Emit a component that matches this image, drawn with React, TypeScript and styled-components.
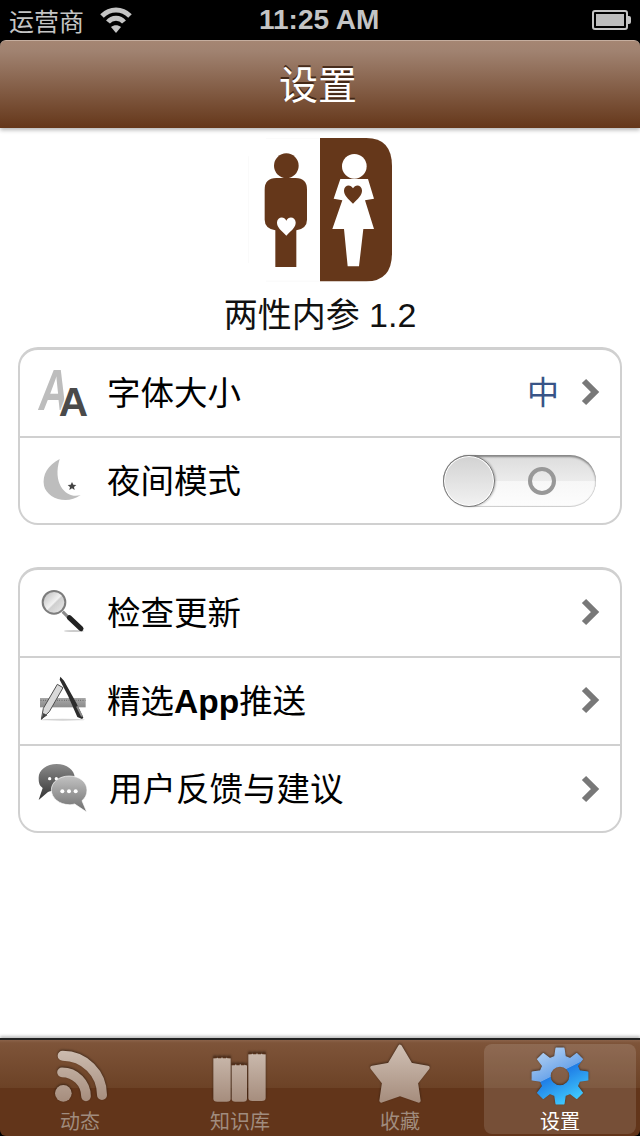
import React from 'react';
import styled, { createGlobalStyle } from 'styled-components';

const CJK = '"Liberation Sans", "Noto Sans CJK SC", sans-serif';

const GlobalStyle = createGlobalStyle`
  html, body {
    margin: 0;
    padding: 0;
    background: #000;
  }
  * {
    box-sizing: border-box;
  }
`;

// 8 tooth gear, drawn in the coordinates of the tab icon
const gearPath = (cx: number, cy: number) => {
  const outer = 84;
  const inner = 60;
  const pts: string[] = [];
  for (let i = 0; i < 8; i++) {
    const a = (i * Math.PI) / 4 - Math.PI / 2;
    const at = (r: number, d: number) =>
      `${(cx + r * Math.cos(a + d)).toFixed(1)} ${(cy + r * Math.sin(a + d)).toFixed(1)}`;
    pts.push(`${i === 0 ? 'M' : 'L'}${at(inner, -0.26)}`);
    pts.push(`L${at(outer, -0.14)}`);
    pts.push(`L${at(outer, 0.14)}`);
    pts.push(`L${at(inner, 0.26)}`);
  }
  const hole = 30;
  return `${pts.join(' ')} Z M${cx - hole} ${cy} a${hole} ${hole} 0 1 0 ${hole * 2} 0 a${hole} ${hole} 0 1 0 ${-hole * 2} 0 Z`;
};

const Wifi = () => (
  <svg width="32" height="28" viewBox="0 0 32 28">
    <path d="M2 10 C10 2 22 2 30 10" fill="none" stroke="#c4c4c4" strokeWidth="5" />
    <path d="M8 16 C12 11 20 11 24 16" fill="none" stroke="#c4c4c4" strokeWidth="5" />
    <path d="M16 27 L11 21 C14 18.500 18 18.500 21 21 Z" fill="#c4c4c4" />
  </svg>
);

const Logo = () => (
  <svg width="144" height="144" viewBox="85 25 432 432">
    <path d="M86 25 H300 V455 H86 Z" fill="#fff" />
    <path d="M85.500 80 V400" stroke="#eeeeee" strokeWidth="1.500" />
    <path d="M140 25.500 H300 M140 454.500 H300" stroke="#f0f0f0" strokeWidth="1.500" />
    <path d="M301 25 H440 Q517 25 517 110 V370 Q517 455 440 455 H301 Z" fill="#65371a" />
    <circle cx="200" cy="108" r="37" fill="#65371a" />
    <path
      d="M170 145 H228 Q262 145 262 180 V270 Q262 296 230 302 V412 H167 V302 Q135 296 135 270 V180 Q135 145 170 145 Z"
      fill="#65371a"
    />
    <path
      d="M200 318 C185 303 171 293 172 278 C173 262 193 258 200 273 C207 258 227 262 228 278 C229 293 215 303 200 318 Z"
      fill="#fff"
    />
    <circle cx="404" cy="110" r="37" fill="#fff" />
    <path
      d="M362 148 H445 L463 207 L436 212 L463 298 H431 L418 410 H384 L373 298 H338 L368 212 L342 207 Z"
      fill="#fff"
    />
    <path
      d="M400 222 C386 208 372 197 373 182 C374 165 393 162 400 176 C407 162 426 165 427 182 C428 197 414 208 400 222 Z"
      fill="#65371a"
    />
  </svg>
);

const FontIcon = () => (
  <svg width="64" height="64" viewBox="64 60 192 192">
    <text
      transform="translate(84 210) scale(0.72 1)"
      fontFamily="Liberation Sans"
      fontWeight="700"
      fontStyle="italic"
      fontSize="172"
      fill="#bdbdbd"
    >
      A
    </text>
    <text
      x="144"
      y="228"
      fontFamily="Liberation Sans"
      fontWeight="700"
      fontSize="122"
      fill="#4a4a4a"
      stroke="#fff"
      strokeWidth="8"
      paintOrder="stroke"
    >
      A
    </text>
  </svg>
);

const MoonIcon = () => (
  <svg width="64" height="64" viewBox="64 327 192 192">
    <path
      d="M147 357 C112 375 94 405 100 437 C108 472 165 498 210 465 C175 478 122 440 147 357 Z"
      fill="#bdbdbd"
    />
    <path
      d="M184 426 L188 434 L197 435 L190 441 L192 450 L184 445 L176 450 L178 441 L171 435 L180 434 Z"
      fill="#444"
    />
  </svg>
);

const SearchIcon = () => (
  <svg width="64" height="64" viewBox="64 63 192 192">
    <defs>
      <linearGradient id="lens" x1="0" y1="0" x2="1" y2="1">
        <stop offset="0" stopColor="#b5b5b5" />
        <stop offset="0.5" stopColor="#f2f2f2" />
        <stop offset="0.55" stopColor="#cfcfcf" />
        <stop offset="1" stopColor="#eeeeee" />
      </linearGradient>
    </defs>
    <ellipse cx="190" cy="216" rx="30" ry="3" fill="#ccc" />
    <path d="M156 158 L176 178" stroke="#8a8a8a" strokeWidth="9" />
    <path d="M176 176 L211 209" stroke="#222" strokeWidth="15" strokeLinecap="round" />
    <circle cx="130" cy="130" r="34" fill="url(#lens)" stroke="#7d7d7d" strokeWidth="6" />
  </svg>
);

const AppIcon = () => (
  <svg width="64" height="64" viewBox="64 327 192 192">
    <defs>
      <linearGradient id="ruler" x1="0" y1="0" x2="0" y2="1">
        <stop offset="0" stopColor="#a8a8a8" />
        <stop offset="1" stopColor="#8c8c8c" />
      </linearGradient>
    </defs>
    <ellipse cx="156" cy="482" rx="66" ry="3" fill="#d4d4d4" />
    <rect x="88" y="417" width="137" height="28" fill="url(#ruler)" />
    <path d="M90 424 H224" stroke="#5f5f5f" strokeWidth="4" strokeDasharray="2 5" />
    <path d="M92 481 L98 448 L140 376 L157 386 L116 458 Z" fill="#d9d9d9" stroke="#4e4e4e" strokeWidth="3" strokeLinejoin="round" />
    <path d="M92 481 L98 462 L110 469 Z" fill="#444" />
    <path d="M149 353 L160 365 L197 432 L218 476 L214 480 L200 474 L172 410 L147 362 Z" fill="#2c2c2c" />
    <path d="M199 442 L214 472" stroke="#8a8a8a" strokeWidth="6" />
  </svg>
);

const ChatIcon = () => (
  <svg width="64" height="64" viewBox="64 591 192 192">
    <defs>
      <linearGradient id="backBubble" x1="0" y1="0" x2="0" y2="1">
        <stop offset="0" stopColor="#8a8a8a" />
        <stop offset="1" stopColor="#333" />
      </linearGradient>
      <linearGradient id="frontBubble" x1="0" y1="0" x2="0" y2="1">
        <stop offset="0" stopColor="#c2c2c2" />
        <stop offset="1" stopColor="#6e6e6e" />
      </linearGradient>
    </defs>
    <path
      d="M138 612 C168 612 192 630 192 652 C192 676 166 694 138 692 C128 692 120 692 112 696 L84 720 L96 684 C84 676 84 664 84 652 C84 630 108 612 138 612 Z"
      fill="url(#backBubble)"
    />
    <circle cx="117" cy="656" r="5" fill="#fff" />
    <circle cx="137" cy="656" r="5" fill="#fff" />
    <circle cx="157" cy="656" r="5" fill="#fff" />
    <path
      d="M176 648 C206 648 229 666 229 690 C229 704 224 714 214 722 L228 756 L192 732 C184 734 180 734 176 734 C146 734 122 714 122 690 C122 666 146 648 176 648 Z"
      fill="url(#frontBubble)"
      stroke="#fff"
      strokeWidth="2"
    />
    <circle cx="155" cy="694" r="6" fill="#fff" />
    <circle cx="175" cy="694" r="6" fill="#fff" />
    <circle cx="195" cy="694" r="6" fill="#fff" />
  </svg>
);

const Chevron = () => (
  <svg width="20" height="28" viewBox="0 0 20 28">
    <path d="M4 3 L15 14 L4 25" fill="none" stroke="#787878" strokeWidth="6" />
  </svg>
);

// shared paint for the tab icons, every icon uses the same y range in its viewBox
const TabGradient = () => (
  <svg width="0" height="0" style={{ display: 'block' }}>
    <defs>
      <linearGradient id="tabIcon" gradientUnits="userSpaceOnUse" x1="0" y1="50" x2="0" y2="218">
        <stop offset="0" stopColor="#cfbfb3" />
        <stop offset="1" stopColor="#a58c7c" />
      </linearGradient>
      <linearGradient id="gear" x1="0.1" y1="0" x2="0.6" y2="1">
        <stop offset="0" stopColor="#b9d4f2" />
        <stop offset="0.5" stopColor="#6ea6ea" />
        <stop offset="0.51" stopColor="#1f7de6" />
        <stop offset="1" stopColor="#3fc8fd" />
      </linearGradient>
    </defs>
  </svg>
);

const RssIcon = () => (
  <TabSvg width="64" height="64" viewBox="144 42 192 192">
    <g fill="none" stroke="url(#tabIcon)" strokeLinecap="round">
      <path d="M188 77 A118 118 0 0 1 306 195" strokeWidth="30" />
      <path d="M186 127 A72 72 0 0 1 258 199" strokeWidth="29" />
    </g>
    <circle cx="190" cy="190" r="25" fill="url(#tabIcon)" />
  </TabSvg>
);

const BooksIcon = () => (
  <TabSvg width="64" height="64" viewBox="624 42 192 192">
    <path d="M640 85 Q666 80 692 85 V206 Q692 215 680 215 H652 Q640 215 640 206 Z" fill="url(#tabIcon)" />
    <path d="M695 106 Q718 100 741 106 V206 Q741 215 730 215 H706 Q695 215 695 206 Z" fill="url(#tabIcon)" />
    <path d="M745 73 Q771 68 797 73 V204 Q797 213 785 213 H757 Q745 213 745 204 Z" fill="url(#tabIcon)" />
    <path d="M640 82 H692 M695 103 H741 M745 70 H797" stroke="#54301a" strokeWidth="5" strokeDasharray="10 4" />
  </TabSvg>
);

const StarIcon = () => (
  <TabSvg width="64" height="64" viewBox="144 42 192 192">
    <path
      d="M240 50 L272 104 L323 113 L288 158 L296 212 L240 192 L184 212 L192 158 L157 113 L208 104 Z"
      fill="url(#tabIcon)"
      stroke="url(#tabIcon)"
      strokeWidth="12"
      strokeLinejoin="round"
    />
  </TabSvg>
);

const GearIcon = () => (
  <TabSvg width="64" height="64" viewBox="624 42 192 192">
    <path d={gearPath(720, 138)} fill="url(#gear)" fillRule="evenodd" stroke="url(#gear)" strokeWidth="4" strokeLinejoin="round" />
  </TabSvg>
);

const App = () => {
  return (
    <Page>
      <GlobalStyle />
      <TabGradient />
      <StatusBar>
        <Carrier>运营商</Carrier>
        <Wifi />
        <Clock>11:25 AM</Clock>
        <Battery>
          <BatteryBody>
            <BatteryFill />
          </BatteryBody>
          <BatteryCap />
        </Battery>
      </StatusBar>
      <NavBar>设置</NavBar>
      <Content>
        <AppInfo>
          <Logo />
          <Caption>两性内参 1.2</Caption>
        </AppInfo>
        <Group>
          <Row>
            <RowIcon><FontIcon /></RowIcon>
            <Label>字体大小</Label>
            <Value>中</Value>
            <Chevron />
          </Row>
          <Row>
            <RowIcon><MoonIcon /></RowIcon>
            <Label>夜间模式</Label>
            <Switch>
              <Knob />
              <Ring />
            </Switch>
          </Row>
        </Group>
        <Group>
          <Row>
            <RowIcon><SearchIcon /></RowIcon>
            <Label>检查更新</Label>
            <Chevron />
          </Row>
          <Row>
            <RowIcon><AppIcon /></RowIcon>
            <Label>
              精选<b>App</b>推送
            </Label>
            <Chevron />
          </Row>
          <Row>
            <RowIcon><ChatIcon /></RowIcon>
            <Label $nudge={2}>用户反馈与建议</Label>
            <Chevron />
          </Row>
        </Group>
      </Content>
      <TabBar>
        <Tab>
          <RssIcon />
          <TabLabel>动态</TabLabel>
        </Tab>
        <Tab>
          <BooksIcon />
          <TabLabel>知识库</TabLabel>
        </Tab>
        <Tab>
          <StarIcon />
          <TabLabel>收藏</TabLabel>
        </Tab>
        <Tab $active>
          <GearIcon />
          <TabLabel $active>设置</TabLabel>
        </Tab>
      </TabBar>
    </Page>
  );
};

const Page = styled.div`
  width: 640px;
  height: 1136px;
  display: flex;
  flex-direction: column;
  overflow: hidden;
  background: #000;
  font-family: ${CJK};
`;

const StatusBar = styled.div`
  height: 40px;
  flex: none;
  display: flex;
  align-items: center;
  padding: 0 9px;
  color: #c4c4c4;
`;

const Carrier = styled.span`
  font-size: 25px;
  width: 91px;
`;

const Clock = styled.span`
  font-size: 28px;
  font-weight: 700;
  width: 121px;
  margin-left: 127px;
  white-space: nowrap;
`;

const Battery = styled.div`
  margin-left: auto;
  display: flex;
  align-items: center;
`;

const BatteryBody = styled.div`
  width: 36px;
  height: 20px;
  border: 2px solid #c4c4c4;
  border-radius: 3px;
  padding: 2px;
`;

const BatteryFill = styled.div`
  height: 100%;
  background: #bdbdbd;
`;

const BatteryCap = styled.div`
  width: 3px;
  height: 8px;
  background: #c4c4c4;
  border-radius: 0 2px 2px 0;
`;

const NavBar = styled.div`
  height: 88px;
  flex: none;
  position: relative;
  display: flex;
  align-items: center;
  justify-content: center;
  padding: 0 4px 6px 0;
  border-radius: 6px 6px 0 0;
  background: linear-gradient(#a58673 0%, #a08270 12%, #65371a 100%);
  border-top: 1px solid #c5ae9f;
  box-shadow: 0 2px 4px rgba(0, 0, 0, 0.3);
  color: #fff;
  font-size: 39px;
  text-shadow: 0 -2px 0 rgba(50, 25, 10, 0.8);
`;

const Content = styled.div`
  flex: 1;
  background: #fff;
  padding: 10px 18px 0;
  display: flex;
  flex-direction: column;
  gap: 42px;
`;

const AppInfo = styled.div`
  display: flex;
  flex-direction: column;
  align-items: center;
  margin-bottom: -31px;

  svg {
    display: block;
  }
`;

const Caption = styled.div`
  margin-top: 12px;
  height: 42px;
  line-height: 42px;
  font-size: 34px;
  color: #111;
`;

const Group = styled.div`
  border: 2px solid #d0d0d0;
  border-top-width: 3px;
  border-radius: 20px;
  background: #fff;
`;

const Row = styled.div`
  height: 88px;
  display: flex;
  align-items: center;
  padding: 0 20px 2px 0;
  border-top: 2px solid #d0d0d0;

  &:first-child {
    height: 86px;
    border-top: none;
  }

  &:last-child {
    height: 87px;
    padding-bottom: 0;
  }
`;

const RowIcon = styled.div`
  width: 87px;
  flex: none;
  display: flex;
  justify-content: center;

  svg {
    display: block;
  }
`;

const Label = styled.div<{ $nudge?: number }>`
  flex: 1;
  font-size: 33.500px;
  color: #000;
  padding-bottom: 4px;
  margin-left: ${({ $nudge }) => $nudge || 0}px;
  white-space: nowrap;

  b {
    font-weight: 700;
  }
`;

const Value = styled.span`
  font-size: 32px;
  color: #385487;
  margin-right: 21px;
  padding-bottom: 4px;
`;

const Switch = styled.div`
  width: 153px;
  height: 52px;
  margin-right: 4px;
  display: flex;
  align-items: center;
  border-radius: 26px;
  box-shadow: inset 0 2px 2px rgba(0, 0, 0, 0.4), inset 0 -1px 1px rgba(0, 0, 0, 0.2);
  background: linear-gradient(#dcdcdc 0%, #ececec 50%, #f7f7f7 51%, #fdfdfd 100%);
`;

const Knob = styled.div`
  width: 52px;
  height: 52px;
  border-radius: 50%;
  border: 1px solid #777;
  background: linear-gradient(#d2d2d2, #f2f2f2);
  box-shadow: inset 0 0 0 1px #fff, 1px 0 2px rgba(0, 0, 0, 0.25);
`;

const Ring = styled.div`
  width: 28px;
  height: 28px;
  margin-left: 33px;
  border-radius: 50%;
  border: 4px solid #989898;
`;

const TabBar = styled.div`
  height: 98px;
  flex: none;
  display: grid;
  grid-template-columns: repeat(4, 1fr);
  padding: 4px 0;
  border-radius: 0 0 6px 6px;
  border-top: 2px solid #222;
  box-shadow: 0 -2px 3px rgba(0, 0, 0, 0.25);
  background: linear-gradient(#8a6249 0, #7e5439 3px, #6c4226 48px, #62351a 48px, #62351a 100%);
`;

const Tab = styled.div<{ $active?: boolean }>`
  display: flex;
  flex-direction: column;
  align-items: center;
  margin: 0 4px;
  border-radius: 8px;
  background: ${({ $active }) => ($active ? 'rgba(255, 255, 255, 0.13)' : 'transparent')};
`;

const TabSvg = styled.svg`
  display: block;
  flex: none;
  filter: drop-shadow(0 -1px 1px rgba(0, 0, 0, 0.45));
`;

const TabLabel = styled.span<{ $active?: boolean }>`
  font-size: 20px;
  line-height: 24px;
  color: ${({ $active }) => ($active ? '#fff' : '#a08c7e')};
  margin-top: 2px;
`;

export default App;
